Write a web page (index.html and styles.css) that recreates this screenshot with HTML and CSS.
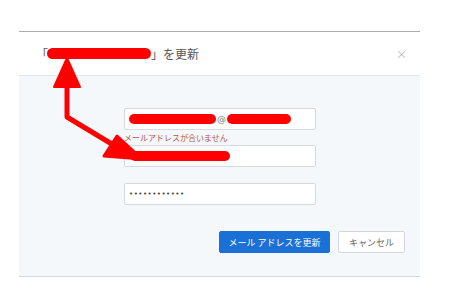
FILE: index.html
```html
<!DOCTYPE html>
<html lang="ja">
<head>
  <meta charset="UTF-8" />
  <link rel="stylesheet" href="styles.css">
</head>
<body>

  <!-- Update dialog -->
  <div class="modal">
    <div class="modal-header">
      <span class="title">「<span class="redact redact-title"></span>」を更新</span>
      <span class="close">×</span>
    </div>

    <div class="modal-body">
      <div class="form">
        <div class="field"><span class="redact redact-user"></span><span class="at">@</span><span class="redact redact-domain"></span></div>
        <div class="error">メールアドレスが合いません</div>
        <div class="field"><span class="redact redact-confirm"></span></div>
        <div class="field password">••••••••••••</div>
      </div>

      <div class="actions">
        <button class="btn btn-primary">メール アドレスを更新</button>
        <button class="btn btn-cancel">キャンセル</button>
      </div>
    </div>
  </div>

  <!-- Annotation arrow drawn over the screenshot -->
  <svg class="annotation" width="449" height="293" viewBox="0 0 449 293">
    <polygon points="67,58 54,87 80,87" fill="#f00" stroke="#f00" stroke-width="2" stroke-linejoin="round"/>
    <polyline points="67,84 67,117 130,155" fill="none" stroke="#f00" stroke-width="5" stroke-linejoin="round" stroke-linecap="round"/>
    <polygon points="117,136 142,159 104,156" fill="#f00" stroke="#f00" stroke-width="3" stroke-linejoin="round"/>
  </svg>

</body>
</html>
```

FILE: styles.css
```css
* {
  margin: 0;
  padding: 0;
  box-sizing: border-box;
}

body {
  background: #fff;
  font-family: "Noto Sans CJK JP", "Noto Sans", sans-serif;
  color: #555;
  padding-top: 31px;
  position: relative;
}

.modal {
  width: 401px;
  margin-left: 19px;
  border-top: 1px solid #a9adb2;
}

.modal-header {
  height: 44px;
  display: flex;
  align-items: center;
  justify-content: space-between;
  padding: 0 13px 0 17px;
  border-bottom: 1px solid #e3e7eb;
}

.title {
  font-size: 12px;
  color: #555;
  display: flex;
  align-items: center;
}

.close {
  font-size: 11px;
  color: #b5b5b5;
}

.redact {
  display: inline-block;
  background: #f00;
  border-radius: 6px;
}

.redact-title {
  width: 104px;
  height: 11px;
  margin-left: -1px;
}

.modal-body {
  background: #f5f8fb;
  border-bottom: 1px solid #d3d6da;
  padding: 32px 15px 23px 105px;
}

.form {
  width: 192px;
  display: flex;
  flex-direction: column;
}

.field {
  height: 22px;
  background: #fff;
  border: 1px solid #d5dade;
  border-radius: 2px;
  display: flex;
  align-items: center;
  padding-left: 4px;
}

.redact-user {
  width: 87px;
  height: 10px;
}

.at {
  font-size: 9px;
  color: #777;
  margin: 0 1px;
  font-family: "DejaVu Sans", sans-serif;
}

.redact-domain {
  width: 64px;
  height: 10px;
}

.redact-confirm {
  width: 100px;
  height: 10px;
  margin-left: 1px;
}

.error {
  font-size: 8px;
  line-height: 15px;
  color: #c0504a;
  white-space: nowrap;
}

.password {
  margin-top: 16px;
  font-size: 7px;
  letter-spacing: 0.5px;
  color: #444;
  font-family: "DejaVu Sans", sans-serif;
}

.actions {
  display: flex;
  justify-content: flex-end;
  gap: 8px;
  margin-top: 26px;
}

.btn {
  height: 22px;
  font-family: inherit;
  font-size: 9px;
  border-radius: 2px;
  cursor: pointer;
}

.btn-primary {
  width: 111px;
  background: #1b70d6;
  border: 1px solid #1b70d6;
  color: #fff;
}

.btn-cancel {
  width: 67px;
  background: #fff;
  border: 1px solid #d3d6da;
  color: #666;
}

.annotation {
  position: absolute;
  top: 0;
  left: 0;
  pointer-events: none;
}
```
